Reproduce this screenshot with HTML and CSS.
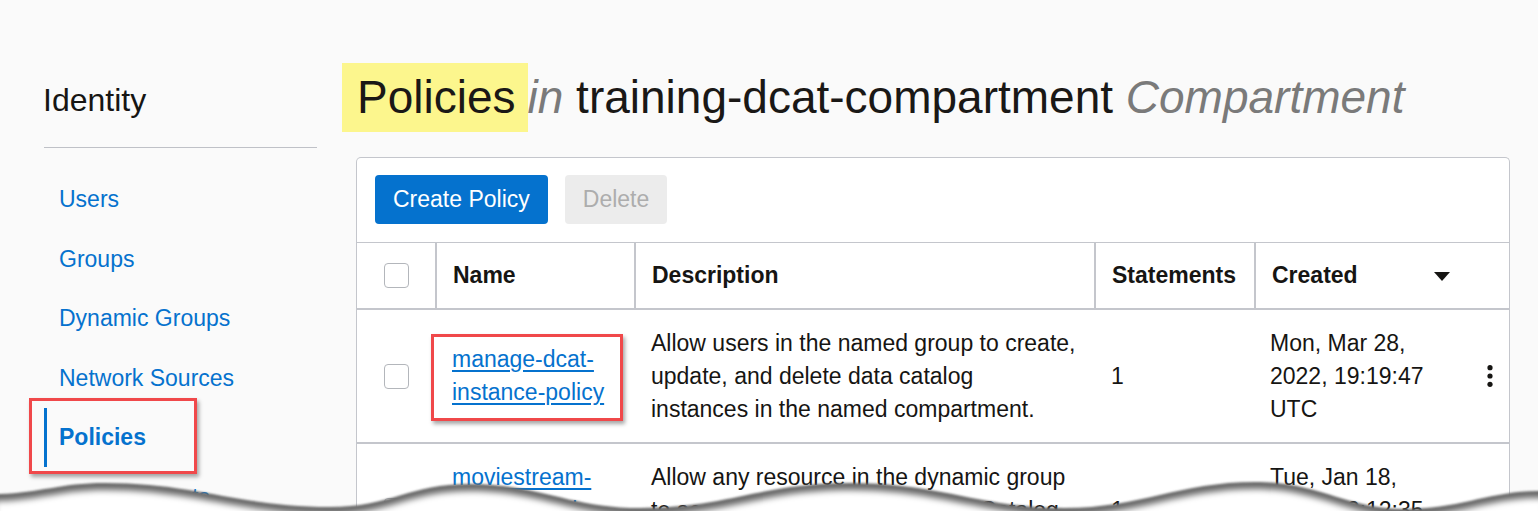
FILE: index.html
```html
<!DOCTYPE html>
<html lang="en">
<head>
<meta charset="utf-8">
<title>Policies</title>
<link rel="stylesheet" href="styles.css">
</head>
<body>
<div class="page">
  <aside class="sidebar">
    <h2 class="side-title">Identity</h2>
    <nav class="side-nav">
      <a class="nav-item" href="#">Users</a>
      <a class="nav-item" href="#">Groups</a>
      <a class="nav-item" href="#">Dynamic Groups</a>
      <a class="nav-item" href="#">Network Sources</a>
      <a class="nav-item active" href="#">Policies<span class="annot annot-nav"></span></a>
      <a class="nav-item" href="#">Compartments</a>
    </nav>
  </aside>
  <main class="main">
    <h1 class="title"><span class="hl">Policies</span><em class="muted">in</em> training-dcat-compartment <em class="muted">Compartment</em></h1>
    <section class="panel">
      <div class="toolbar">
        <button class="btn btn-primary">Create Policy</button>
        <button class="btn btn-disabled">Delete</button>
      </div>
      <div class="trow thead">
        <div class="th th-check"><span class="cb"></span></div>
        <div class="th">Name</div>
        <div class="th">Description</div>
        <div class="th">Statements</div>
        <div class="th th-created">Created<span class="caret"></span></div>
      </div>
      <div class="trow tr">
        <div class="td td-check"><span class="cb"></span></div>
        <div class="td td-name"><a class="link" href="#">manage-dcat-<br>instance-policy</a><span class="annot annot-name"></span></div>
        <div class="td">Allow users in the named group to create,<br>update, and delete data catalog<br>instances in the named compartment.</div>
        <div class="td">1</div>
        <div class="td td-created"><span>Mon, Mar 28,<br>2022, 19:19:47<br>UTC</span>
          <svg class="kebab" width="6" height="22" viewBox="0 0 6 22"><circle cx="3" cy="2.7" r="2.6"/><circle cx="3" cy="11" r="2.6"/><circle cx="3" cy="19.3" r="2.6"/></svg>
        </div>
      </div>
      <div class="trow tr">
        <div class="td td-check"><span class="cb"></span></div>
        <div class="td td-name"><a class="link" href="#">moviestream-<br>dcat-dynamic-<br>group-policy</a></div>
        <div class="td">Allow any resource in the dynamic group<br>to access resources in the Data Catalog<br>instances in the compartment.</div>
        <div class="td">1</div>
        <div class="td td-created"><span>Tue, Jan 18,<br>2022, 22:12:35<br>UTC</span>
          <svg class="kebab" width="6" height="22" viewBox="0 0 6 22"><circle cx="3" cy="2.7" r="2.6"/><circle cx="3" cy="11" r="2.6"/><circle cx="3" cy="19.3" r="2.6"/></svg>
        </div>
      </div>
    </section>
  </main>
</div>
<svg class="tear" width="1538" height="41" viewBox="0 0 1538 41">
  <defs>
    <filter id="soft" x="-2%" y="-60%" width="104%" height="220%">
      <feGaussianBlur stdDeviation="3"/>
    </filter>
    <filter id="edge" x="-2%" y="-60%" width="104%" height="220%">
      <feGaussianBlur stdDeviation="0.8"/>
    </filter>
  </defs>
  <path fill="#666666" filter="url(#edge)" d="M0,24 C40,23 60,13 105,13 C195,13 240,37 330,37 C390,37 410,14 470,14 C540,14 570,38 640,38 C730,38 760,13 850,13 C940,13 980,38 1065,38 C1140,38 1180,12 1255,12 C1320,12 1345,39 1405,39 C1460,39 1490,21 1538,21 L1545,21 L1545,70 L-5,70 L-5,24 Z"/>
  <path fill="#ffffff" filter="url(#soft)" transform="translate(0,7)" d="M0,24 C40,23 60,13 105,13 C195,13 240,37 330,37 C390,37 410,14 470,14 C540,14 570,38 640,38 C730,38 760,13 850,13 C940,13 980,38 1065,38 C1140,38 1180,12 1255,12 C1320,12 1345,39 1405,39 C1460,39 1490,21 1538,21 L1545,21 L1545,70 L-5,70 L-5,24 Z"/>
</svg>
</body>
</html>
```

FILE: styles.css
```css
html, body {
  margin: 0;
  padding: 0;
}

body {
  width: 1538px;
  height: 511px;
  overflow: hidden;
  position: relative;
  background: #fafafa;
  font-family: "Liberation Sans", Arial, sans-serif;
  color: #161513;
}

.page {
  display: flex;
  align-items: flex-start;
  padding-left: 44px;
}

/* Sidebar */
.sidebar {
  flex: none;
  width: 273px;
  margin-right: 25px;
}

.side-title {
  margin: 80px 0 0;
  font-size: 32px;
  line-height: 40px;
  font-weight: 400;
  text-indent: -1px;
  padding-bottom: 27px;
  border-bottom: 1px solid #bfc1c7;
  color: #161513;
}

.side-nav {
  display: flex;
  flex-direction: column;
  padding-top: 22px;
}

.nav-item {
  position: relative;
  display: block;
  height: 59.5px;
  line-height: 59.5px;
  padding-left: 15px;
  font-size: 23px;
  color: #0572ce;
  text-decoration: none;
  white-space: nowrap;
}

.nav-item.active {
  font-weight: 700;
  border-left: 3px solid #0572ce;
  padding-left: 12px;
  height: 59px;
  line-height: 59px;
  margin-bottom: 0.5px;
}

/* Annotation boxes */
.annot {
  position: absolute;
  box-sizing: border-box;
  border: 3px solid #f0484a;
  box-shadow: 2px 3px 4px rgba(0, 0, 0, 0.35);
  pointer-events: none;
}

.annot-nav {
  left: -18px;
  top: -10px;
  width: 168px;
  height: 76px;
}

.annot-name {
  left: -4px;
  top: 24px;
  width: 192px;
  height: 87px;
}

/* Main */
.main {
  flex: 1;
  min-width: 0;
  padding-right: 28px;
}

.title {
  margin: 63px 0 0;
  font-size: 46px;
  line-height: 69px;
  font-weight: 400;
  white-space: nowrap;
  color: #1a1816;
}

.hl {
  display: inline-block;
  background: #fcf68d;
  padding: 0 12px 0 15px;
}

.muted {
  color: #7a7a7a;
}

.panel {
  margin: 25px 0 0 14px;
  background: #ffffff;
  border: 1px solid #c4c6cc;
  border-bottom: none;
  border-radius: 5px 5px 0 0;
  height: 420px;
}

.toolbar {
  display: flex;
  gap: 17px;
  padding: 17px 18px 18px;
}

.btn {
  height: 49px;
  padding: 0 18px;
  border: none;
  border-radius: 4px;
  font-family: "Liberation Sans", Arial, sans-serif;
  font-size: 23px;
  cursor: pointer;
}

.btn-primary {
  background: #0572ce;
  color: #ffffff;
}

.btn-disabled {
  background: #ececec;
  color: #adadad;
}

/* Table */
.trow {
  display: grid;
  grid-template-columns: 78px 199px 460px 160px 255px;
  font-size: 23px;
}

.thead {
  box-sizing: border-box;
  height: 68px;
  border-top: 1px solid #c4c6cc;
  border-bottom: 2px solid #c4c6cc;
}

.th {
  display: flex;
  align-items: center;
  border-left: 2px solid #c4c6cc;
  padding-left: 16px;
  font-weight: 700;
  white-space: nowrap;
}

.th-check {
  border-left: none;
  padding-left: 0;
  justify-content: center;
}

.th-created {
  justify-content: space-between;
  padding-right: 59px;
}

.caret {
  width: 0;
  height: 0;
  border-left: 8px solid transparent;
  border-right: 8px solid transparent;
  border-top: 9px solid #161513;
  margin-top: 1px;
}

.tr {
  border-bottom: 2px solid #c4c6cc;
}

.td {
  position: relative;
  display: flex;
  align-items: center;
  padding: 16.5px 17px;
  line-height: 33px;
  white-space: nowrap;
}

.td-check {
  padding: 0;
  justify-content: center;
}

.td-name {
  padding-right: 10px;
}

.td-created {
  justify-content: space-between;
  padding-left: 16px;
  padding-right: 16.5px;
}

.cb {
  display: block;
  box-sizing: border-box;
  width: 25px;
  height: 25px;
  border: 1px solid #b3b6bb;
  border-radius: 4px;
  background: #ffffff;
}

.link {
  color: #0572ce;
  text-decoration: underline;
  text-underline-offset: 3px;
}

.kebab {
  display: block;
  fill: #161513;
}

/* Torn paper edge overlay */
.tear {
  position: absolute;
  left: 0;
  top: 470px;
  display: block;
}
```
